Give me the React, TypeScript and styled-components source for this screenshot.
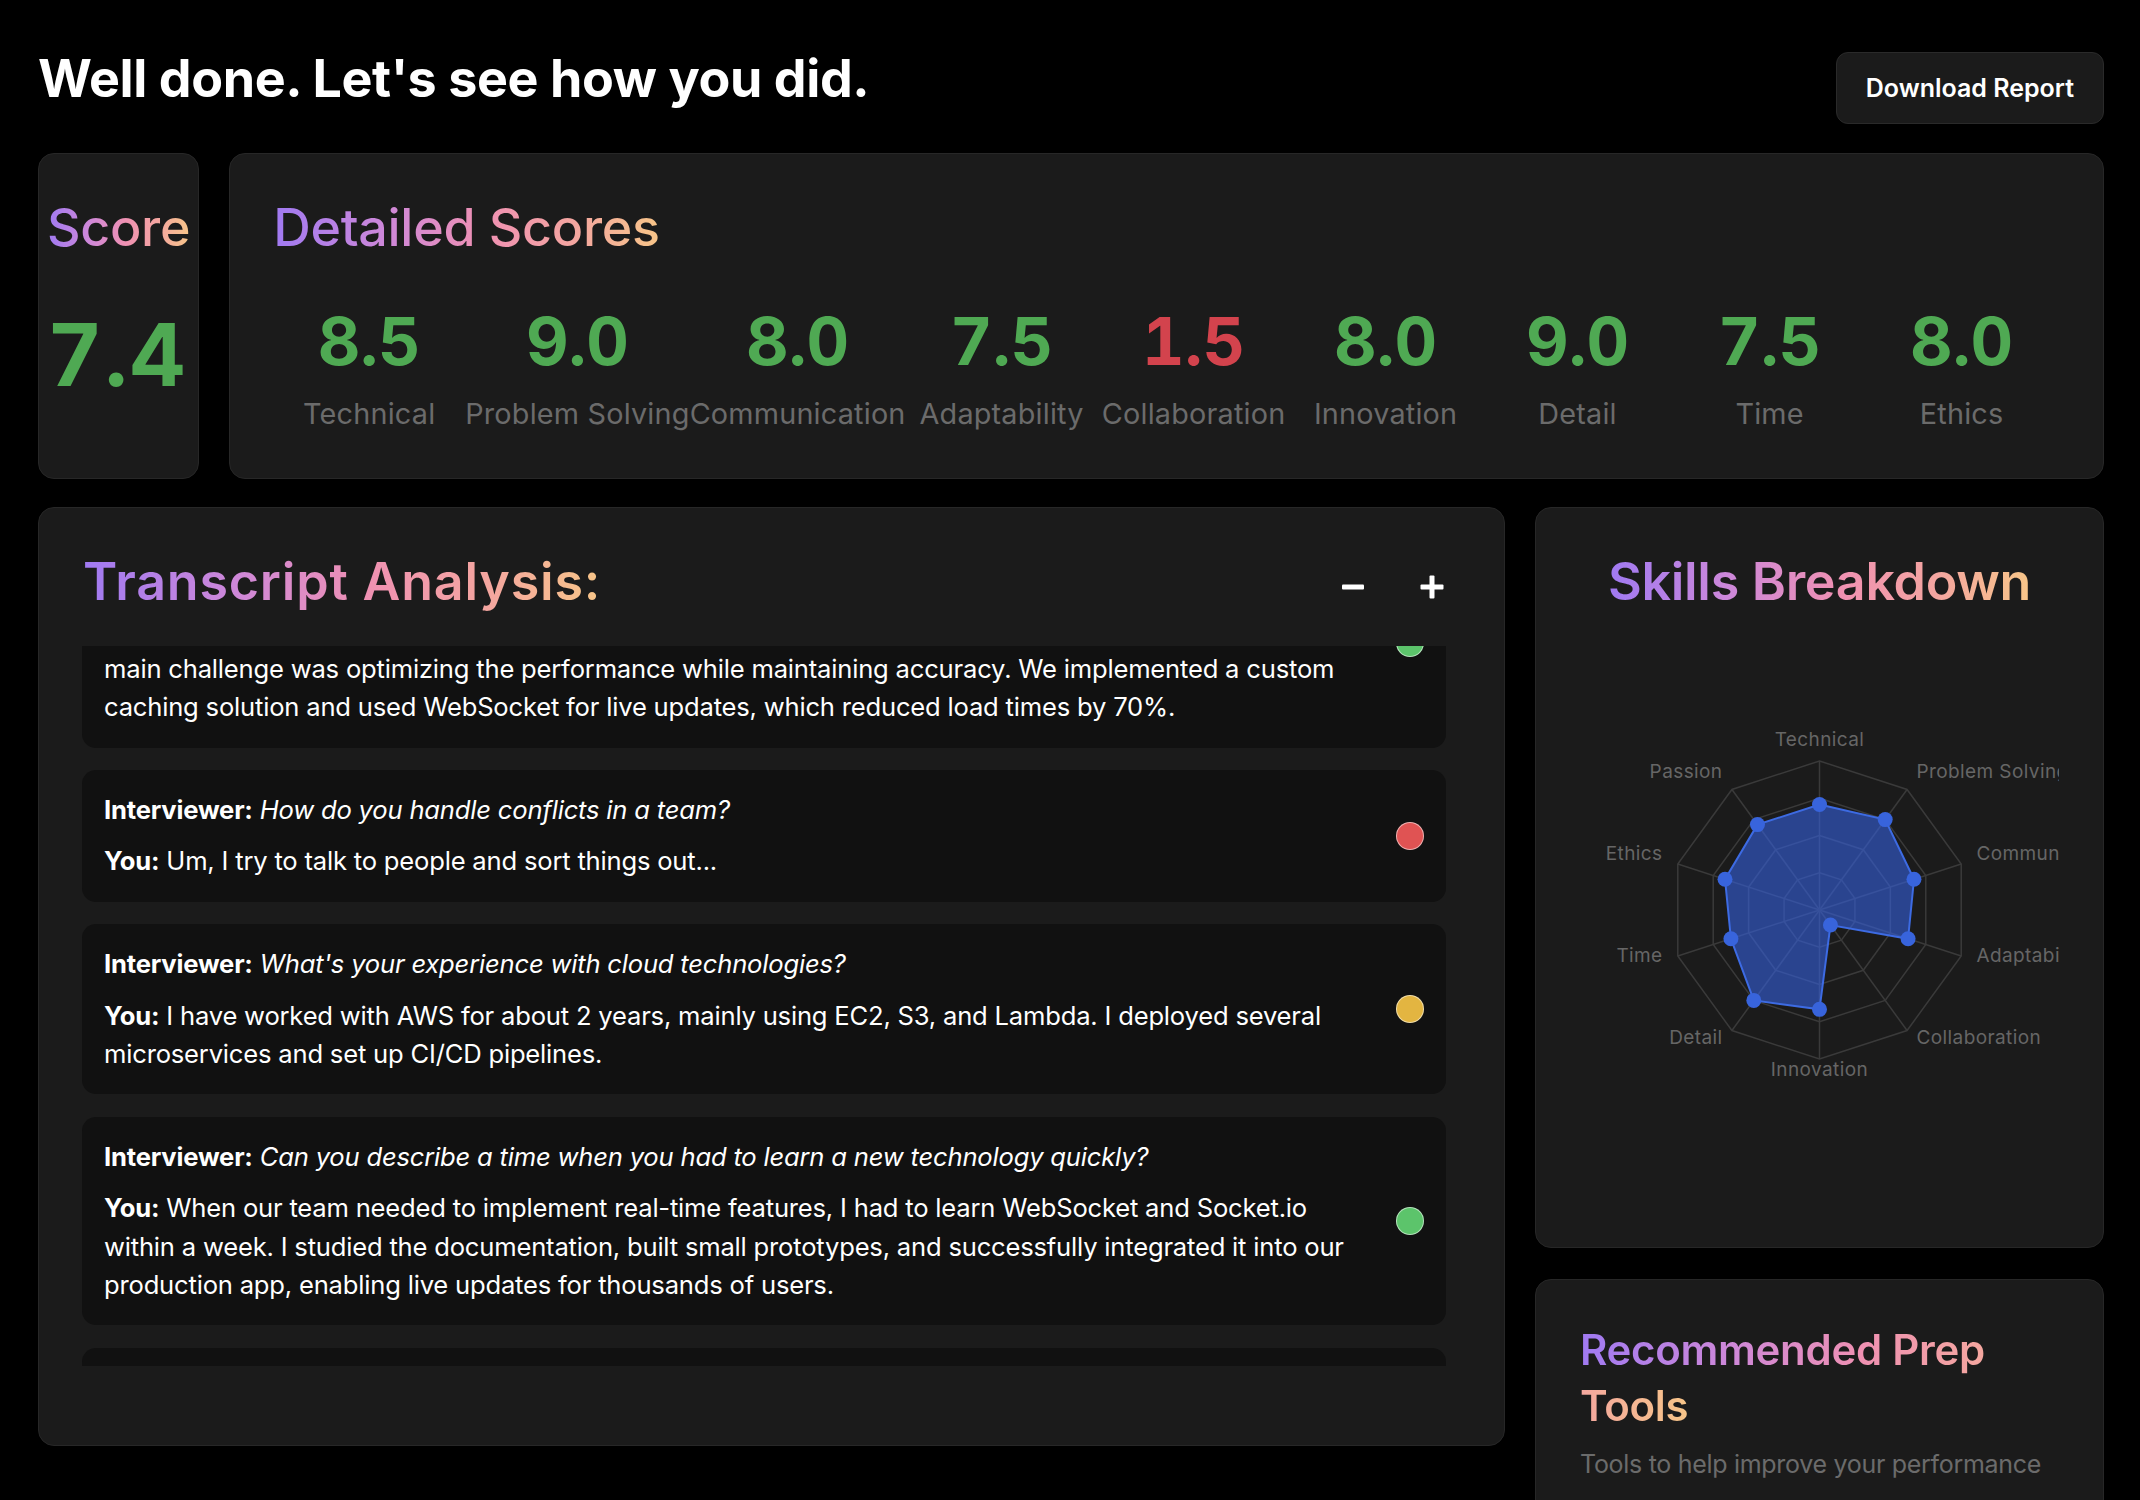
import React, { useLayoutEffect, useRef } from "react";
import styled, { createGlobalStyle } from "styled-components";

const GlobalStyle = createGlobalStyle`
  * { box-sizing: border-box; }
  html, body { margin: 0; padding: 0; background: #000; }
  body { font-family: Inter, "Noto Sans", sans-serif; color: #fff; }
`;

const Page = styled.div`
  padding: 38px 36px 38px 38px;
  background: #000;
  min-height: 1500px;
`;

const Header = styled.header`
  display: flex;
  justify-content: space-between;
  align-items: flex-start;
  height: 115px;
`;

const MainTitle = styled.h1`
  margin: 10px 0 0 0;
  font-size: 52px;
  font-weight: 700;
  letter-spacing: -0.4px;
  line-height: 1.21;
  color: #fff;
`;

const DownloadButton = styled.button`
  margin-top: 14px;
  height: 72px;
  padding: 0 29px;
  background: #1b1b1b;
  border: 1px solid #2a2a2a;
  border-radius: 12px;
  color: #fff;
  font-family: Inter, sans-serif;
  font-size: 25px;
  font-weight: 600;
`;

const Card = styled.section`
  background: #1b1b1b;
  border: 1px solid #272727;
  border-radius: 16px;
`;

const TopRow = styled.div`
  display: flex;
  gap: 30px;
  align-items: stretch;
`;

const ScoreCard = styled(Card)`
  padding: 42px 8px 0 8px;
`;

const DetailCard = styled(Card)`
  flex: 1;
  padding: 42px 44px 47px 43px;
`;

const GradientText = styled.span`
  background: linear-gradient(90deg, #a07af2 0%, #cf88d8 30%, #ef91b2 55%, #f4a6a0 78%, #f7c588 100%);
  -webkit-background-clip: text;
  background-clip: text;
  color: transparent;
  -webkit-box-decoration-break: slice;
  box-decoration-break: slice;
`;

const SectionTitle = styled.h2<{ $center?: boolean; $weight?: number; $spacing?: number }>`
  margin: 0;
  font-size: 52px;
  font-weight: ${(p) => p.$weight ?? 500};
  line-height: 64px;
  letter-spacing: ${(p) => p.$spacing ?? -0.3}px;
  text-align: ${(p) => (p.$center ? "center" : "left")};
`;

const BigScore = styled.div`
  margin-top: 43px;
  font-size: 86px;
  font-weight: 700;
  line-height: 104px;
  letter-spacing: 2px;
  font-variant-numeric: tabular-nums;
  color: #4fa953;
`;

const ScoreRow = styled.div`
  display: flex;
  margin-top: 41px;
`;

const ScoreItem = styled.div`
  min-width: 192px;
  display: flex;
  flex-direction: column;
  align-items: center;
`;

const ScoreValue = styled.div<{ $bad?: boolean }>`
  font-size: 66px;
  font-weight: 700;
  line-height: 80px;
  font-variant-numeric: tabular-nums;
  color: ${(p) => (p.$bad ? "#d3434d" : "#4fa953")};
`;

const ScoreLabel = styled.div`
  margin-top: 16px;
  font-size: 28.8px;
  line-height: 34px;
  letter-spacing: 0.2px;
  color: #6b6b6b;
  white-space: nowrap;
`;

const MainGrid = styled.div`
  display: grid;
  grid-template-columns: 1fr 569px;
  column-gap: 30px;
  margin-top: 28px;
  align-items: start;
`;

const TranscriptCard = styled(Card)`
  padding: 42px 44px 79px 43px;
`;

const TranscriptHeader = styled.div`
  display: flex;
  justify-content: space-between;
  align-items: center;
  height: 64px;
  margin-bottom: 32px;
  padding-left: 1px;
`;

const ZoomControls = styled.div`
  display: flex;
  gap: 31px;
  margin-top: 10px;
  margin-right: 4px;
`;

const IconButton = styled.button`
  width: 48px;
  height: 48px;
  display: flex;
  align-items: center;
  justify-content: center;
  background: none;
  border: none;
  padding: 0;
  color: #fff;
`;

const EntryList = styled.div`
  height: 720px;
  overflow-y: auto;
  padding-right: 14px;
  display: flex;
  flex-direction: column;
  gap: 22.4px;
  scrollbar-width: none;
  &::-webkit-scrollbar { display: none; }
`;

const Entry = styled.div`
  flex-shrink: 0;
  display: flex;
  align-items: center;
  gap: 32px;
  background: #111111;
  border-radius: 14px;
  padding: 21px 22px;
`;

const EntryText = styled.div`
  flex: 1;
  font-size: 25.6px;
  line-height: 38.4px;
  letter-spacing: -0.2px;
  color: #fff;
`;

const Line = styled.p`
  margin: 0;
  white-space: pre-line;
  & + & { margin-top: 13px; }
  b { font-weight: 700; }
  i { font-style: italic; }
`;

const StatusDot = styled.span<{ $color: string }>`
  flex-shrink: 0;
  width: 28px;
  height: 28px;
  border-radius: 50%;
  background: ${(p) => p.$color};
  border: 1px solid rgba(255, 255, 255, 0.55);
`;

const RightColumn = styled.div`
  display: flex;
  flex-direction: column;
  gap: 31px;
`;

const SkillsCard = styled(Card)`
  padding: 42px 44px 97px 44px;
`;

const ChartWrap = styled.div`
  margin-top: 56px;
  height: 480px;
  display: flex;
  justify-content: center;
`;

const PrepCard = styled(Card)`
  padding: 42px 44px 60px 44px;
`;

const PrepTitle = styled.h2`
  margin: 0;
  font-size: 42px;
  font-weight: 600;
  line-height: 56px;
  letter-spacing: -0.3px;
`;

const PrepSubtitle = styled.p`
  margin: 11px 0 0 0;
  font-size: 25px;
  line-height: 38.4px;
  letter-spacing: -0.3px;
  color: #6b6b6b;
`;

const scores = [
  { label: "Technical", value: 8.5 },
  { label: "Problem Solving", value: 9.0 },
  { label: "Communication", value: 8.0 },
  { label: "Adaptability", value: 7.5 },
  { label: "Collaboration", value: 1.5 },
  { label: "Innovation", value: 8.0 },
  { label: "Detail", value: 9.0 },
  { label: "Time", value: 7.5 },
  { label: "Ethics", value: 8.0 },
];

const radarData = [
  { label: "Technical", value: 8.5 },
  { label: "Problem Solving", value: 9 },
  { label: "Communication", value: 8 },
  { label: "Adaptability", value: 7.5 },
  { label: "Collaboration", value: 1.5 },
  { label: "Innovation", value: 8 },
  { label: "Detail", value: 9 },
  { label: "Time", value: 7.5 },
  { label: "Ethics", value: 8 },
  { label: "Passion", value: 8.5 },
];

const entries = [
  {
    q: "Tell me about a challenging project you've worked on recently.",
    a: "I built a real-time analytics dashboard for our sales platform using React and Node.js. The\nmain challenge was optimizing the performance while maintaining accuracy. We implemented a custom caching solution and used WebSocket for live updates, which reduced load times by 70%.",
    color: "#5cc46b",
  },
  {
    q: "How do you handle conflicts in a team?",
    a: "Um, I try to talk to people and sort things out...",
    color: "#e05353",
  },
  {
    q: "What's your experience with cloud technologies?",
    a: "I have worked with AWS for about 2 years, mainly using EC2, S3, and Lambda. I deployed several microservices and set up CI/CD pipelines.",
    color: "#e3b541",
  },
  {
    q: "Can you describe a time when you had to learn a new technology quickly?",
    a: "When our team needed to implement real-time features, I had to learn WebSocket and Socket.io within a week. I studied the documentation, built small prototypes, and successfully integrated it into our production app, enabling live updates for thousands of users.",
    color: "#5cc46b",
  },
  {
    q: "Where do you see yourself in five years?",
    a: "I hope to grow into a senior engineering role and mentor newer developers on the team.",
    color: "#5cc46b",
  },
];

const RadarChart: React.FC = () => {
  const W = 479;
  const H = 480;
  const cx = W / 2;
  const cy = H / 2;
  const R = 149;
  const max = 12;
  const n = radarData.length;
  const angle = (i: number) => -Math.PI / 2 + (i * 2 * Math.PI) / n;
  const pt = (i: number, r: number) => [cx + r * Math.cos(angle(i)), cy + r * Math.sin(angle(i))];
  const ring = (r: number) =>
    radarData.map((_, i) => pt(i, r).map((v) => v.toFixed(2)).join(",")).join(" ");
  const dataPts = radarData.map((d, i) => pt(i, (d.value / max) * R));
  return (
    <svg width={W} height={H} viewBox={`0 0 ${W} ${H}`}>
      <g stroke="#3a3a3a" strokeWidth={1.5} fill="none">
        {[1, 2, 3, 4].map((k) => (
          <polygon key={k} points={ring((R * k) / 4)} />
        ))}
        {radarData.map((_, i) => {
          const [x, y] = pt(i, R);
          return <line key={i} x1={cx} y1={cy} x2={x} y2={y} />;
        })}
      </g>
      <polygon
        points={dataPts.map((p) => p.join(",")).join(" ")}
        fill="#3661de"
        fillOpacity={0.6}
        stroke="#3d6be3"
        strokeWidth={2}
      />
      {dataPts.map(([x, y], i) => (
        <circle key={i} cx={x} cy={y} r={7.5} fill="#3864dc" />
      ))}
      {radarData.map((d, i) => {
        const [x, y] = pt(i, 165);
        const c = Math.cos(angle(i));
        const anchor = c > 0.01 ? "start" : c < -0.01 ? "end" : "middle";
        return (
          <text
            key={d.label}
            x={x}
            y={y + 1}
            textAnchor={anchor}
            fontFamily="Inter, sans-serif"
            fontSize={19}
            letterSpacing={0.4}
            fill="#666"
          >
            {d.label}
          </text>
        );
      })}
    </svg>
  );
};

const MinusIcon = () => (
  <svg width="24" height="24" viewBox="0 0 24 24">
    <rect x="1" y="9.5" width="22" height="5" rx="1" fill="#fff" />
  </svg>
);

const PlusIcon = () => (
  <svg width="24" height="24" viewBox="0 0 24 24">
    <rect x="0.5" y="9.5" width="23" height="5" rx="1" fill="#fff" />
    <rect x="9.5" y="0.5" width="5" height="23" rx="1" fill="#fff" />
  </svg>
);

export default function App() {
  const listRef = useRef<HTMLDivElement>(null);
  useLayoutEffect(() => {
    if (listRef.current) listRef.current.scrollTop = 107;
  }, []);

  return (
    <>
      <GlobalStyle />
      <Page>
        <Header>
          <MainTitle>Well done. Let's see how you did.</MainTitle>
          <DownloadButton>Download Report</DownloadButton>
        </Header>

        <TopRow>
          <ScoreCard>
            <SectionTitle>
              <GradientText>Score</GradientText>
            </SectionTitle>
            <BigScore>7.4</BigScore>
          </ScoreCard>
          <DetailCard>
            <SectionTitle>
              <GradientText>Detailed Scores</GradientText>
            </SectionTitle>
            <ScoreRow>
              {scores.map((s) => (
                <ScoreItem key={s.label}>
                  <ScoreValue $bad={s.value < 5}>{s.value.toFixed(1)}</ScoreValue>
                  <ScoreLabel>{s.label}</ScoreLabel>
                </ScoreItem>
              ))}
            </ScoreRow>
          </DetailCard>
        </TopRow>

        <MainGrid>
          <TranscriptCard>
            <TranscriptHeader>
              <SectionTitle $weight={600} $spacing={0.8}>
                <GradientText>Transcript Analysis:</GradientText>
              </SectionTitle>
              <ZoomControls>
                <IconButton aria-label="Zoom out">
                  <MinusIcon />
                </IconButton>
                <IconButton aria-label="Zoom in">
                  <PlusIcon />
                </IconButton>
              </ZoomControls>
            </TranscriptHeader>
            <EntryList ref={listRef}>
              {entries.map((e, i) => (
                <Entry key={i}>
                  <EntryText>
                    <Line>
                      <b>Interviewer:</b> <i>{e.q}</i>
                    </Line>
                    <Line>
                      <b>You:</b> {e.a}
                    </Line>
                  </EntryText>
                  <StatusDot $color={e.color} />
                </Entry>
              ))}
            </EntryList>
          </TranscriptCard>

          <RightColumn>
            <SkillsCard>
              <SectionTitle $center $weight={600}>
                <GradientText>Skills Breakdown</GradientText>
              </SectionTitle>
              <ChartWrap>
                <RadarChart />
              </ChartWrap>
            </SkillsCard>
            <PrepCard>
              <PrepTitle>
                <GradientText>Recommended Prep Tools</GradientText>
              </PrepTitle>
              <PrepSubtitle>Tools to help improve your performance</PrepSubtitle>
            </PrepCard>
          </RightColumn>
        </MainGrid>
      </Page>
    </>
  );
}
